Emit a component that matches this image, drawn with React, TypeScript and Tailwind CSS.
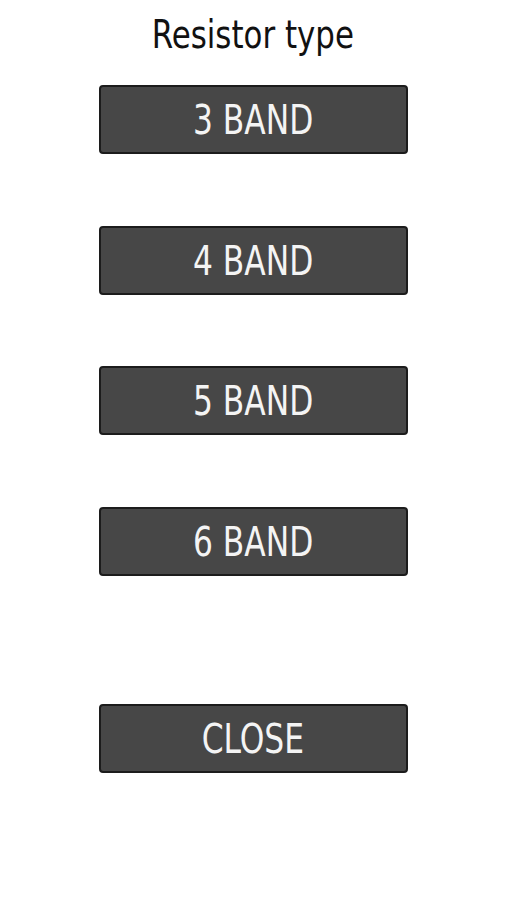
import React from "react";

const font = { fontFamily: '"Liberation Sans Narrow", "DejaVu Sans Condensed", "Open Sans", sans-serif' };

function Btn({ label, className = "" }: { label: string; className?: string }) {
  return (
    <button
      className={`w-[309px] h-[69px] bg-[#474747] border-2 border-[#1c1c1c] rounded-[4px] text-[#f4f4f4] text-[40px] leading-none flex items-center justify-center ${className}`}
      style={font}
    >
      <span className="inline-block scale-x-[0.87] font-light">{label}</span>
    </button>
  );
}

export default function App() {
  return (
    <div className="w-[506px] h-[900px] bg-white flex flex-col items-center" style={font}>
      <div className="mt-[13px] h-[44px] text-[39px] leading-[44px] text-[#111]">
        <span className="inline-block scale-x-[0.88]">Resistor type</span>
      </div>
      <Btn label="3 BAND" className="mt-[28px]" />
      <Btn label="4 BAND" className="mt-[72px]" />
      <Btn label="5 BAND" className="mt-[71px]" />
      <Btn label="6 BAND" className="mt-[72px]" />
      <Btn label="CLOSE" className="mt-[128px]" />
    </div>
  );
}
